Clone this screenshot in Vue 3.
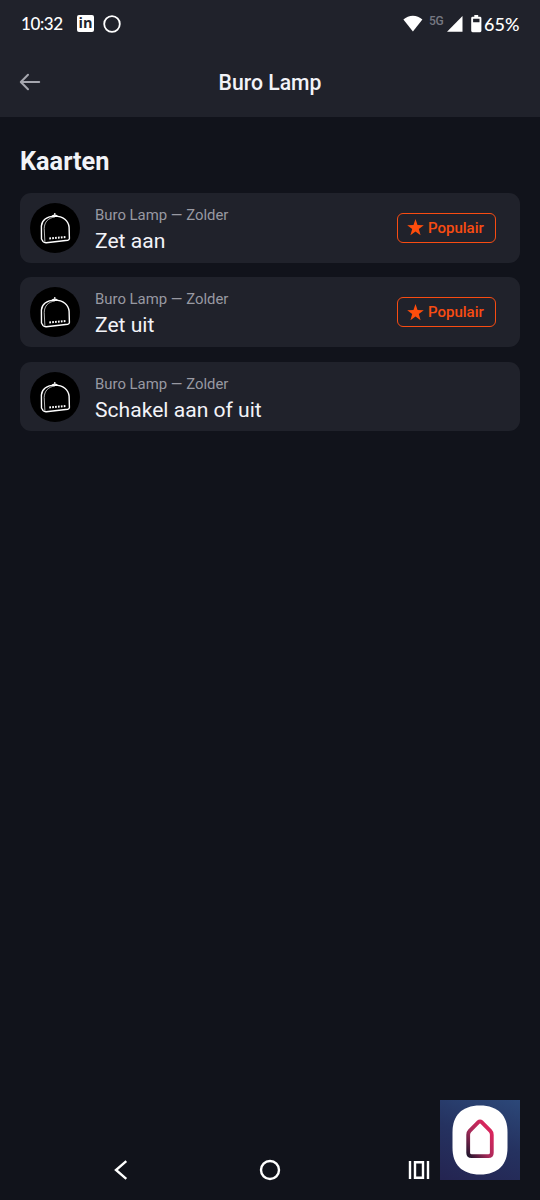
<script setup>
const cards = [
  { device: 'Buro Lamp — Zolder', title: 'Zet aan', popular: true },
  { device: 'Buro Lamp — Zolder', title: 'Zet uit', popular: true },
  { device: 'Buro Lamp — Zolder', title: 'Schakel aan of uit', popular: false },
]
</script>

<template>
  <div class="screen">
    <header class="top">
      <div class="status">
        <span class="time">10:32</span>
        <span class="linkedin"><span>in</span></span>
        <svg class="ring" width="18" height="18" viewBox="0 0 18 18"><circle cx="9" cy="9" r="7.8" /></svg>
        <svg class="wifi" width="20" height="17" viewBox="0 0 20 17"><path d="M0.4 4.6C5.6 -0.7 14.2 -0.7 19.4 4.6L9.9 16.5Z" /></svg>
        <span class="net">5G</span>
        <svg class="signal" width="16" height="16" viewBox="0 0 16 16"><path d="M15.5 0V15.7H0Z" /></svg>
        <svg class="battery" width="11" height="18" viewBox="0 0 11 18">
          <path fill-rule="evenodd" d="M3.3 0H7.2V1.8H9Q10.4 1.8 10.4 3.2V15.8Q10.4 17.2 9 17.2H1.6Q.2 17.2 .2 15.8V3.2Q.2 1.8 1.6 1.8H3.3ZM2.1 3.8V7.2H8.5V3.8Z" />
        </svg>
        <span class="percent">65%</span>
      </div>
      <div class="bar">
        <svg class="back" width="22" height="18" viewBox="0 0 22 18"><path d="M20.2 9H2M9 1.8L1.8 9L9 16.2" /></svg>
        <h1>Buro Lamp</h1>
      </div>
    </header>

    <main>
      <h2>Kaarten</h2>
      <div class="list">
        <article v-for="card in cards" :key="card.title" class="card">
          <div class="avatar">
            <svg width="50" height="50" viewBox="0 0 50 50">
              <path class="outline" d="M11.4 23C11.8 17.5 16.5 13.3 24.9 13.1C33.2 13.1 38.4 17.8 39.1 24.2L39.4 35.6Q39.4 37 37.8 37.3L16.2 39.8Q14.2 39.9 13.1 38.6L11.5 36Z" />
              <path class="edge" d="M14.9 39L14.2 25.5C14.4 18.7 18.4 14.9 25 13.9" />
              <path class="hook" d="M22.2 13.1Q24.8 11.2 27.4 13.1M24.8 12V10" />
              <path class="vents" d="M19.3 35.5L35.6 34" />
            </svg>
          </div>
          <div class="copy">
            <div class="device">{{ card.device }}</div>
            <div class="title">{{ card.title }}</div>
          </div>
          <div v-if="card.popular" class="badge">
            <svg width="17" height="17" viewBox="0 0 16 16"><path d="M8 0L9.9 5.6L15.8 5.8L11.1 9.4L12.8 15.2L8 11.8L3.2 15.2L4.9 9.4L.2 5.8L6.1 5.6Z" /></svg>
            <span>Populair</span>
          </div>
        </article>
      </div>
    </main>

    <nav class="nav">
      <svg width="16" height="22" viewBox="0 0 16 22"><path d="M13.3 2.2L3 11L13.3 19.8" /></svg>
      <svg width="22" height="22" viewBox="0 0 22 22"><circle cx="11" cy="11" r="9" /></svg>
      <svg width="22" height="20" viewBox="0 0 22 20"><path d="M2 1V19M20 1V19M7 2.2H15V17.8H7Z" /></svg>
    </nav>

    <div class="logo">
      <svg width="80" height="80" viewBox="0 0 80 80">
        <defs>
          <linearGradient id="house" x1="0" y1="1" x2=".8" y2=".15">
            <stop offset="0" stop-color="#21152d" />
            <stop offset=".5" stop-color="#a72a59" />
            <stop offset="1" stop-color="#d8265d" />
          </linearGradient>
        </defs>
        <path fill="#fff" d="M40 5.5C58.5 5.5 67.5 16 67.5 32V48C67.5 64 58.5 74.5 40 74.5C21.5 74.5 12.5 64 12.5 48V32C12.5 16 21.5 5.5 40 5.5Z" />
        <path fill="none" stroke="url(#house)" stroke-width="3.8" stroke-linejoin="round" d="M38.1 22.3Q40 20.7 41.9 22.3L50.3 30.9Q51.8 32.5 51.8 34.7V52.7Q51.8 56.2 48.3 56.2H31.7Q28.2 56.2 28.2 52.7V34.7Q28.2 32.5 29.7 30.9Z" />
      </svg>
    </div>
  </div>
</template>

<style>
body {
  margin: 0;
  background: #11131b;
}
</style>

<style scoped>
.screen {
  position: relative;
  display: flex;
  flex-direction: column;
  width: 540px;
  height: 1200px;
  overflow: hidden;
  background: #11131b;
  color: #f2f3f8;
  font-family: Roboto, "Liberation Sans", sans-serif;
}
svg {
  display: block;
  flex: none;
}
.top {
  height: 117px;
  background: #20222b;
}
.status {
  display: flex;
  align-items: center;
  height: 47px;
  padding: 0 21px;
  box-sizing: border-box;
  color: #fff;
}
.time {
  width: 56px;
  font: 500 17px/20px Lato, sans-serif;
  letter-spacing: -0.4px;
}
.linkedin {
  display: flex;
  justify-content: center;
  width: 17px;
  height: 17px;
  border-radius: 2px;
  background: #fff;
  color: #20222b;
  font: 700 14.5px/16px "Open Sans", sans-serif;
}
.ring {
  margin-left: 9px;
}
.ring circle {
  fill: none;
  stroke: #fff;
  stroke-width: 1.8;
}
.wifi {
  margin-left: auto;
}
.wifi, .signal, .battery {
  fill: #fff;
}
.net {
  width: 18px;
  margin: -6px 0 0 6px;
  color: #777983;
  font-size: 12px;
  font-weight: 500;
  letter-spacing: -0.3px;
}
.battery {
  margin-left: 8px;
}
.percent {
  width: 35px;
  margin-left: 2px;
  font: 500 18px/20px Lato, sans-serif;
}
.bar {
  display: grid;
  grid-template-columns: 80px 1fr 80px;
  align-items: center;
  height: 70px;
}
.back {
  margin-left: 19px;
}
.back path {
  fill: none;
  stroke: #a5a6ae;
  stroke-width: 2;
  stroke-linecap: round;
  stroke-linejoin: round;
}
h1 {
  margin: 2px 0 0;
  text-align: center;
  font-size: 21.2px;
  line-height: 26px;
  font-weight: 500;
}
main {
  flex: 1;
  padding: 30px 20px 0;
}
h2 {
  margin: 0 0 16px;
  font-size: 25.3px;
  line-height: 30px;
  font-weight: 700;
}
.list {
  display: grid;
  gap: 14.7px;
}
.card {
  display: flex;
  align-items: center;
  height: 69.7px;
  padding: 0 24px 0 10px;
  box-sizing: border-box;
  border-radius: 11px;
  background: #20222b;
}
.avatar {
  width: 50px;
  height: 50px;
  border-radius: 50%;
  background: #000;
}
.avatar path {
  fill: none;
  stroke: #fff;
  stroke-linejoin: round;
}
.avatar .outline {
  stroke-width: 1.4;
}
.avatar .edge {
  stroke-width: 0.7;
}
.avatar .hook {
  stroke-width: 1.2;
}
.avatar .vents {
  stroke-width: 2;
  stroke-dasharray: 1.7 1.2;
}
.copy {
  flex: 1;
  margin: 3px 0 0 15px;
}
.device {
  color: #9899a2;
  font-size: 14.9px;
  line-height: 22px;
}
.title {
  margin-top: 1px;
  font-size: 21.1px;
  line-height: 28px;
}
.badge {
  display: flex;
  align-items: center;
  gap: 4px;
  width: 99px;
  height: 30px;
  padding-left: 9px;
  box-sizing: border-box;
  border: 1.5px solid #f84c12;
  border-radius: 6px;
  color: #f84c12;
  font-size: 15px;
  font-weight: 500;
}
.badge svg {
  fill: #ff4d0c;
}
.nav {
  display: grid;
  grid-template-columns: repeat(3, 149px);
  justify-content: center;
  justify-items: center;
  align-items: center;
  height: 60px;
}
.nav path, .nav circle {
  fill: none;
  stroke: #fff;
  stroke-width: 2.4;
}
.logo {
  position: absolute;
  right: 20px;
  bottom: 20px;
  width: 80px;
  height: 80px;
  background: linear-gradient(200deg, #2c4879 0%, #253260 48%, #242451 100%);
}
</style>
